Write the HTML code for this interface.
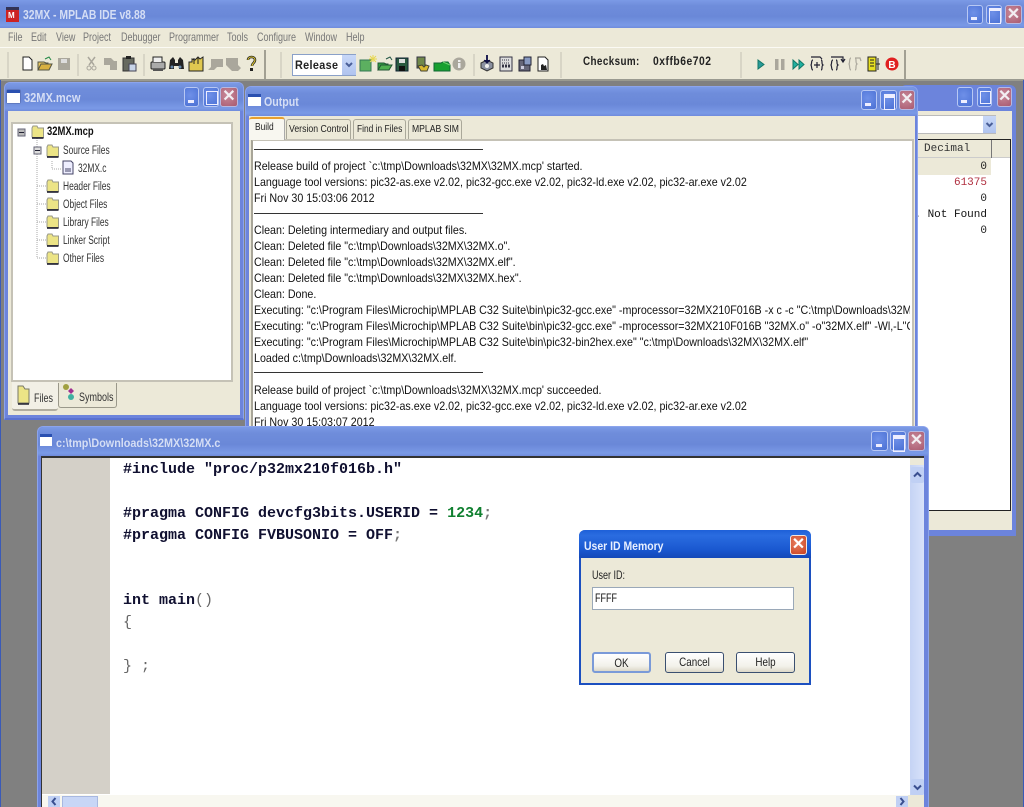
<!DOCTYPE html>
<html><head><meta charset="utf-8"><style>
html,body{margin:0;padding:0}
body{width:1024px;height:807px;position:relative;overflow:hidden;background:#808080;font-family:"Liberation Sans",sans-serif}
div,span,svg{position:absolute;box-sizing:border-box}
.tb{background:linear-gradient(#7b9ae6,#6f8ddb 20%,#6a88d8 60%,#7a9ae6 90%,#6f8bdc)}
.tt{color:#d5def5;font-weight:bold;white-space:pre;font-size:13px;line-height:16px;transform-origin:0 0}
.b{width:16px;height:19px;border:1px solid #b8c8f4;border-radius:3px;background:radial-gradient(circle at 40% 40%,#6f90e8,#4a70d4)}
.b i{position:absolute;display:block}
.x{background:radial-gradient(circle at 40% 40%,#c98a9a,#a85a70);font:bold 16px/17px "Liberation Sans",sans-serif;color:#f2eef2;text-align:center;border-color:#b8b8e0}
.o{font-size:12px;color:#111;white-space:pre;line-height:16px;left:254px;width:737px;overflow:hidden;transform:scaleX(.89);transform-origin:0 0}
.m{font-family:"Liberation Mono",monospace;font-size:15px;font-weight:bold;white-space:pre;line-height:20px;left:123px;color:#101030}
.g{color:#777;font-size:12px;line-height:16px;white-space:pre;top:29px;transform:scaleX(.75);transform-origin:0 0}
.n{font-size:11.5px;line-height:14px;color:#333;white-space:pre;transform:scaleX(.73);transform-origin:0 0}
.tab{font-size:10.5px;line-height:14px;color:#222;white-space:pre;transform:scaleX(.8);transform-origin:0 0}
.d{font-family:"Liberation Mono",monospace;font-size:11px;line-height:14px;white-space:pre;right:37px;color:#222;text-align:right}
.btn{top:652px;height:21px;width:59px;border:1px solid #3a4f70;border-radius:3px;background:linear-gradient(#fff,#f2f1ea 70%,#dcd8c8);font-size:12px;line-height:19px;text-align:center;color:#222}
.btn span{left:0;right:0;top:0;transform:scaleX(.82)}
</style></head><body>

<!-- main -->
<div class="tb" style="left:0;top:0;width:1024px;height:28px"></div>
<div style="left:6px;top:7px;width:13px;height:15px;background:#c22;border-top:3px solid #335"></div>
<div style="left:8px;top:12px;color:#fff;font:bold 8px/8px 'Liberation Sans',sans-serif">M</div>
<div class="tt" style="left:23px;top:7px;font-size:13px;transform:scaleX(.8)">32MX - MPLAB IDE v8.88</div>
<div class="b" style="left:967px;top:5px;height:19px"><i style="left:3px;bottom:3px;width:6px;height:3px;background:#eef"></i></div>
<div class="b" style="left:986px;top:5px;height:19px"><i style="left:2px;top:2px;width:10px;height:12px;border:1px solid #eef;border-top-width:3px"></i></div>
<div class="b x" style="left:1005px;top:5px;width:17px;height:19px">✕</div>

<div style="left:0;top:28px;width:1024px;height:52px;background:#ece9d8"></div>
<div style="left:0;top:47px;width:1024px;height:1px;background:#fbfaf4"></div>
<div style="left:0;top:79px;width:1024px;height:2px;background:#9a9a90"></div>
<span class="g" style="left:8px">File</span><span class="g" style="left:31px">Edit</span><span class="g" style="left:56px">View</span><span class="g" style="left:83px">Project</span><span class="g" style="left:121px">Debugger</span><span class="g" style="left:169px">Programmer</span><span class="g" style="left:227px">Tools</span><span class="g" style="left:257px">Configure</span><span class="g" style="left:305px">Window</span><span class="g" style="left:346px">Help</span>

<!-- toolbar svg -->
<svg style="left:0;top:48px" width="1024" height="32" viewBox="0 48 1024 32">
<g stroke="#c4c1b4" fill="none"><path d="M8 52v26M78 54v22M144 54v22M281 52v26M474 54v22M561 52v26M741 52v26"/></g>
<path d="M265 50v29M905 50v29" stroke="#8a887c" stroke-width="1.5"/>
<path d="M23 57h6l3 3v10h-9z" fill="#fff" stroke="#222"/>
<path d="M38 70v-8h6l2 1h2v7z" fill="#e8c860" stroke="#554"/><path d="M38 70l3-6h11l-3 6z" fill="#d8b040" stroke="#554"/><path d="M45 59l4-2 2 3" stroke="#284" fill="none"/>
<rect x="58" y="58" width="12" height="12" fill="#aaa79c"/><rect x="61" y="59" width="6" height="4" fill="#ddd"/>
<path d="M88 57l6 8M95 57l-6 8" stroke="#aaa79c" stroke-width="1.5"/><circle cx="89" cy="68" r="2" fill="none" stroke="#aaa79c"/><circle cx="94" cy="68" r="2" fill="none" stroke="#aaa79c"/>
<path d="M104 58h7l3 3h3v9h-7v-5h-6z" fill="#aaa79c"/>
<rect x="123" y="58" width="11" height="13" fill="#66695f" stroke="#333"/><rect x="126" y="56" width="5" height="3" fill="#222"/><rect x="129" y="64" width="7" height="7" fill="#c8d4e8" stroke="#445"/>
<rect x="151" y="62" width="14" height="7" rx="1" fill="#aaa" stroke="#222"/><path d="M153 62v-5h9v5" fill="#eee" stroke="#222"/><rect x="153" y="69" width="10" height="2" fill="#555"/>
<path d="M170 60l3-3 2 3v3h3v-3l2-3 3 3 1 9h-5v-3h-5v3h-5z" fill="#222"/><circle cx="172" cy="67" r="1.5" fill="#68a"/><circle cx="180" cy="67" r="1.5" fill="#68a"/>
<path d="M189 71v-9h3v-3l3 1 3-3 2 2 3-2v14z" fill="#e0c850" stroke="#222"/><path d="M194 58v6M198 58v6" stroke="#222"/>
<path d="M208 70l3-3v-8h12v8h-6l-3 3z" fill="#aaa79c"/>
<path d="M226 58h12v7l3 3-3 3h-6l-6-6z" fill="#aaa79c"/>
<path d="M248 60c0-4 7-4 7 0 0 3-3 3-3 6" fill="none" stroke="#222" stroke-width="2.5"/><path d="M248 60c0-4 7-4 7 0 0 3-3 3-3 6" fill="none" stroke="#e8d030"/><rect x="250" y="68" width="3" height="3" fill="#222"/>
<rect x="360" y="60" width="11" height="11" fill="#5cb060" stroke="#375"/><path d="M373 55v7M369 59h8M370 56l6 6M376 56l-6 6" stroke="#e8d850"/>
<path d="M378 70v-7h6l2 1h2v6z" fill="#30a040" stroke="#253"/><path d="M378 70l3-5h11l-3 5z" fill="#50b050" stroke="#253"/><path d="M386 59l4-2 2 3" stroke="#254" fill="none"/>
<rect x="396" y="58" width="12" height="13" fill="#2a5a40" stroke="#123"/><rect x="399" y="59" width="6" height="4" fill="#ddd"/><rect x="399" y="66" width="6" height="5" fill="#111"/>
<rect x="417" y="57" width="8" height="11" fill="#70884a" stroke="#334"/><path d="M418 66l3 5h6l2-5-3-1-2 2-2-2z" fill="#d8b830" stroke="#443"/>
<path d="M434 63h7l2-1h5l2 3v6h-16z" fill="#18a030" stroke="#163"/><path d="M443 62l7 3" stroke="#70d070"/>
<circle cx="459" cy="64" r="6.5" fill="#aaa79c"/><rect x="458" y="63" width="2.5" height="5" fill="#eee"/><rect x="458" y="60" width="2.5" height="2" fill="#eee"/>
<path d="M481 63l6-3 6 3v5l-6 3-6-3z" fill="#8a90a0" stroke="#333"/><path d="M487 55v7" stroke="#225" stroke-width="2"/><path d="M484 60l3 3 3-3" fill="#114" stroke="#114"/><circle cx="487" cy="66" r="2" fill="#eee"/>
<rect x="500" y="57" width="12" height="14" fill="#ddd" stroke="#334"/><path d="M502 60h8M502 63h8" stroke="#334" stroke-dasharray="1 1"/><path d="M502 66h8" stroke="#334" stroke-width="3" stroke-dasharray="2 1"/>
<rect x="519" y="60" width="11" height="11" fill="#667" stroke="#223"/><rect x="524" y="57" width="7" height="8" fill="#8899c0" stroke="#223"/><rect x="521" y="66" width="3" height="3" fill="#ccd"/>
<path d="M538 57h7l3 3v11h-10z" fill="#fff" stroke="#222"/><path d="M541 70v-5l2-1 1 2 2-1 1 5z" fill="#222"/>
<path d="M758 60l6 4.500-6 4.500z" fill="#2a9a9a" stroke="#176"/>
<rect x="775" y="59" width="3.500" height="11" fill="#aaa79c"/><rect x="781" y="59" width="3.500" height="11" fill="#aaa79c"/>
<path d="M793 60l5 4.500-5 4.500zM799 60l5 4.500-5 4.500z" fill="#20b0a0" stroke="#176"/>
<g fill="none" stroke="#223" stroke-width="1.200"><path d="M813 60c-2 0-1 4-2 5 1 1 0 5 2 5M821 60c2 0 0 4 2 5-2 1 0 5-2 5M811 57h9l2 2M817 62v6M814 65h6"/></g>
<g fill="none" stroke="#223" stroke-width="1.200"><path d="M833 60c-2 0-1 4-2 5 1 1 0 5 2 5M836 60c2 0 0 4 2 5-2 1 0 5-2 5M831 57h12v4M841 59l2 3 2-3"/></g>
<g fill="none" stroke="#aaa79c" stroke-width="1.200"><path d="M851 58c-2 0-1 5-2 6 1 1 0 6 2 6M855 58c2 0 0 5 2 6-2 1 0 6-2 6M855 58h5l1 3"/></g>
<rect x="868" y="57" width="8" height="14" fill="#e8e020" stroke="#222"/><path d="M870 60h4M870 63h4M870 66h4M878 58v12M876 64h4" stroke="#222"/>
<circle cx="892" cy="64" r="6.500" fill="#e02020"/>
<text x="892" y="68" font-family="Liberation Sans" font-weight="bold" font-size="10" fill="#fff" text-anchor="middle">B</text>
</svg>
<div style="left:292px;top:54px;width:64px;height:22px;background:#fff;border:1px solid #8aa0c8"></div>
<div style="left:342px;top:55px;width:14px;height:20px;background:linear-gradient(#c8d8f8,#b0c4ef)"></div>
<svg style="left:342px;top:55px" width="14" height="20"><path d="M4 8l3 3 3-3" fill="none" stroke="#4a5f98" stroke-width="2"/></svg>
<div style="left:295px;top:57px;font:bold 12px/16px 'Liberation Sans',sans-serif;letter-spacing:.4px;color:#222;white-space:pre;transform:scaleX(.9);transform-origin:0 0">Release</div>
<div style="left:583px;top:54px;font:bold 12px/14px 'Liberation Sans',sans-serif;letter-spacing:.5px;color:#222;white-space:pre;transform:scaleX(.82);transform-origin:0 0">Checksum:</div>
<div style="left:653px;top:54px;font:bold 12px/14px 'Liberation Sans',sans-serif;letter-spacing:.6px;color:#222;white-space:pre;transform:scaleX(.86);transform-origin:0 0">0xffb6e702</div>

<!-- MDI edges -->
<div style="left:0;top:80px;width:1px;height:727px;background:#3a5ab8"></div>
<div style="left:1023px;top:80px;width:1px;height:727px;background:#3a5ab8"></div>

<!-- behind window -->
<div style="left:900px;top:85px;width:116px;height:451px;background:#6c84dc;border-radius:6px 6px 0 0"></div>
<div class="b" style="left:957px;top:87px;width:16px;height:20px"><i style="left:3px;bottom:3px;width:6px;height:3px;background:#eef"></i></div>
<div class="b" style="left:977px;top:87px;width:15px;height:20px"><i style="left:2px;top:3px;width:9px;height:11px;border:1px solid #eef"></i></div>
<div class="b x" style="left:997px;top:87px;width:15px;height:20px;line-height:18px">✕</div>
<div style="left:905px;top:111px;width:107px;height:419px;background:#ece9d8"></div>
<div style="left:905px;top:115px;width:91px;height:19px;background:#fff;border:1px solid #bbb"></div>
<div style="left:983px;top:116px;width:13px;height:17px;background:linear-gradient(#c8d8f8,#b0c4ef)"></div>
<svg style="left:983px;top:116px" width="13" height="17"><path d="M3.500 7l3 3 3-3" fill="none" stroke="#4a5f98" stroke-width="2"/></svg>
<div style="left:905px;top:139px;width:106px;height:372px;background:#fff;border:1px solid #222;border-left:0"></div>
<div style="left:905px;top:140px;width:105px;height:18px;background:#ece9d8;border-bottom:1px solid #ccc"></div>
<div style="left:991px;top:140px;width:1px;height:18px;background:#777"></div>
<div style="left:905px;top:158px;width:86px;height:17px;background:#ece9d8"></div>
<span class="d" style="left:924px;top:142px;right:auto;color:#333">Decimal</span>
<span class="d" style="top:160px">0</span>
<span class="d" style="top:176px;color:#b03040">61375</span>
<span class="d" style="top:192px">0</span>
<span class="d" style="top:208px;color:#111">. Not Found</span>
<span class="d" style="top:224px">0</span>

<!-- mcw window -->
<div style="left:4px;top:82px;width:240px;height:338px;background:#6c84dc;border-radius:6px 6px 0 0;border:1px solid #8ca4ec;border-bottom:2px solid #5a72d0"></div>
<div class="tb" style="left:5px;top:83px;width:238px;height:28px;border-radius:6px 6px 0 0"></div>
<div style="left:7px;top:90px;width:13px;height:13px;background:#fff;border-top:3px solid #2a50b0;box-shadow:0 0 1px #224"></div>
<div class="tt" style="left:24px;top:90px;transform:scaleX(.85)">32MX.mcw</div>
<div class="b" style="left:184px;top:87px;width:15px;height:20px"><i style="left:3px;bottom:3px;width:6px;height:3px;background:#eef"></i></div>
<div class="b" style="left:203px;top:87px;width:16px;height:20px"><i style="left:2px;top:3px;width:10px;height:12px;border:1px solid #eef"></i></div>
<div class="b x" style="left:220px;top:87px;width:18px;height:20px;line-height:18px">✕</div>
<div style="left:8px;top:111px;width:232px;height:304px;background:#ece9d8"></div>
<div style="left:11px;top:122px;width:222px;height:260px;background:#fff;border:2px solid #c5c2b6"></div>

<!-- tree -->
<svg style="left:0;top:110px" width="250" height="170" viewBox="0 110 250 170">
<g stroke="#aaa" stroke-dasharray="1 1" fill="none"><path d="M37 138V257M52 161v8h9M37 186h10M37 204h10M37 222h10M37 240h10M37 258h10"/></g>
<rect x="18" y="129" width="7" height="7" fill="#bbb" stroke="#667"/><path d="M19 132.500h5" stroke="#223"/>
<rect x="34" y="147" width="7" height="7" fill="#ddd" stroke="#667"/><path d="M35 150.500h5" stroke="#223"/>
<defs><g id="fo"><path d="M0 11V2l1-2h4l1 2h5.500v9.500H1z" fill="#ece486" stroke="#998"/><path d="M0 12h11.500" stroke="#112" stroke-width="1.500"/></g></defs>
<use href="#fo" x="32" y="126"/><use href="#fo" x="47" y="145"/><use href="#fo" x="47" y="180"/><use href="#fo" x="47" y="198"/><use href="#fo" x="47" y="216"/><use href="#fo" x="47" y="234"/><use href="#fo" x="47" y="252"/>
<path d="M63 161h8l2 2v11H63z" fill="#eef" stroke="#446"/><path d="M65 169h6M65 171h6" stroke="#446"/>
</svg>
<span class="n" style="left:47px;top:125px;font-weight:bold;font-size:11.5px;color:#111;transform:scaleX(.82)">32MX.mcp</span>
<span class="n" style="left:63px;top:144px">Source Files</span>
<span class="n" style="left:78px;top:162px">32MX.c</span>
<span class="n" style="left:63px;top:180px">Header Files</span>
<span class="n" style="left:63px;top:198px">Object Files</span>
<span class="n" style="left:63px;top:216px">Library Files</span>
<span class="n" style="left:63px;top:234px">Linker Script</span>
<span class="n" style="left:63px;top:252px">Other Files</span>
<div style="left:58px;top:383px;width:59px;height:25px;background:#ece9d8;border:1px solid #9a988a;border-top:0;border-radius:0 0 3px 3px"></div>
<div style="left:12px;top:382px;width:46px;height:29px;background:#f2f0e6;border-bottom:2px solid #b0ad9f;border-radius:0 0 3px 3px"></div>
<svg style="left:0;top:380px" width="120" height="32"><path d="M18 23V6h5l2 3h4v14z" fill="#ece486" stroke="#776"/><path d="M18 24h11" stroke="#223" stroke-width="1.500"/><circle cx="66" cy="7" r="3" fill="#a0a040"/><path d="M71 8l3 3-3 3-3-3z" fill="#a03090"/><circle cx="71" cy="17" r="3" fill="#40b0a0"/></svg>
<span class="n" style="left:34px;top:391px;font-size:12px;transform:scaleX(.75)">Files</span>
<span class="n" style="left:79px;top:390px;font-size:12px;transform:scaleX(.75)">Symbols</span>

<!-- Output window -->
<div style="left:245px;top:86px;width:673px;height:345px;background:#6c84dc;border-radius:6px 6px 0 0;border:1px solid #8ca4ec"></div>
<div class="tb" style="left:246px;top:87px;width:671px;height:29px;border-radius:6px 6px 0 0"></div>
<div style="left:248px;top:94px;width:13px;height:12px;background:#fff;border-top:3px solid #2a50b0"></div>
<div class="tt" style="left:264px;top:94px;font-size:12.5px;transform:scaleX(.85)">Output</div>
<div class="b" style="left:861px;top:90px;width:16px;height:20px"><i style="left:3px;bottom:3px;width:6px;height:3px;background:#eef"></i></div>
<div class="b" style="left:880px;top:90px;width:17px;height:20px"><i style="left:3px;top:3px;width:9px;height:11px;border:1px solid #eef;border-top-width:4px"></i></div>
<div class="b x" style="left:899px;top:90px;width:16px;height:20px;line-height:18px">✕</div>
<div style="left:249px;top:116px;width:666px;height:315px;background:#ece9d8"></div>
<div style="left:251px;top:139px;width:663px;height:292px;background:#fff;border:2px solid #c5c2b6;border-left-color:#a8a598"></div>
<div style="left:249px;top:117px;width:36px;height:23px;background:#f8f7f0;border-top:2px solid #e8a030;border-radius:3px 3px 0 0;border-right:1px solid #aaa"></div>
<div style="left:286px;top:119px;width:65px;height:20px;background:#ece9d8;border:1px solid #aaa89a;border-bottom:0;border-radius:3px 3px 0 0"></div>
<div style="left:353px;top:119px;width:53px;height:20px;background:#ece9d8;border:1px solid #aaa89a;border-bottom:0;border-radius:3px 3px 0 0"></div>
<div style="left:408px;top:119px;width:54px;height:20px;background:#ece9d8;border:1px solid #aaa89a;border-bottom:0;border-radius:3px 3px 0 0"></div>
<span class="tab" style="left:255px;top:120px">Build</span>
<span class="tab" style="left:289px;top:122px;transform:scaleX(.83)">Version Control</span>
<span class="tab" style="left:357px;top:122px">Find in Files</span>
<span class="tab" style="left:412px;top:122px;transform:scaleX(.82)">MPLAB SIM</span>
<div style="left:254px;top:149px;width:229px;height:1px;background:#333"></div>
<div style="left:254px;top:213px;width:229px;height:1px;background:#333"></div>
<div style="left:254px;top:372px;width:229px;height:1px;background:#333"></div>
<div class="o" style="top:158px">Release build of project `c:\tmp\Downloads\32MX\32MX.mcp' started.</div>
<div class="o" style="top:174px">Language tool versions: pic32-as.exe v2.02, pic32-gcc.exe v2.02, pic32-ld.exe v2.02, pic32-ar.exe v2.02</div>
<div class="o" style="top:190px">Fri Nov 30 15:03:06 2012</div>
<div class="o" style="top:222px">Clean: Deleting intermediary and output files.</div>
<div class="o" style="top:238px">Clean: Deleted file "c:\tmp\Downloads\32MX\32MX.o".</div>
<div class="o" style="top:254px">Clean: Deleted file "c:\tmp\Downloads\32MX\32MX.elf".</div>
<div class="o" style="top:270px">Clean: Deleted file "c:\tmp\Downloads\32MX\32MX.hex".</div>
<div class="o" style="top:286px">Clean: Done.</div>
<div class="o" style="top:302px">Executing: "c:\Program Files\Microchip\MPLAB C32 Suite\bin\pic32-gcc.exe" -mprocessor=32MX210F016B -x c -c "C:\tmp\Downloads\32MX\32MX.c"</div>
<div class="o" style="top:318px">Executing: "c:\Program Files\Microchip\MPLAB C32 Suite\bin\pic32-gcc.exe" -mprocessor=32MX210F016B "32MX.o" -o"32MX.elf" -Wl,-L"C:\Program</div>
<div class="o" style="top:334px">Executing: "c:\Program Files\Microchip\MPLAB C32 Suite\bin\pic32-bin2hex.exe" "c:\tmp\Downloads\32MX\32MX.elf"</div>
<div class="o" style="top:350px">Loaded c:\tmp\Downloads\32MX\32MX.elf.</div>
<div class="o" style="top:382px">Release build of project `c:\tmp\Downloads\32MX\32MX.mcp' succeeded.</div>
<div class="o" style="top:398px">Language tool versions: pic32-as.exe v2.02, pic32-gcc.exe v2.02, pic32-ld.exe v2.02, pic32-ar.exe v2.02</div>
<div class="o" style="top:414px">Fri Nov 30 15:03:07 2012</div>

<!-- Editor -->
<div style="left:37px;top:426px;width:892px;height:381px;background:#6c84dc;border-radius:6px 6px 0 0;border:1px solid #8ca4ec;border-bottom:0"></div>
<div class="tb" style="left:38px;top:427px;width:890px;height:29px;border-radius:6px 6px 0 0"></div>
<div style="left:40px;top:434px;width:12px;height:12px;background:#fff;border-top:3px solid #2a50b0"></div>
<div class="tt" style="left:56px;top:435px;font-size:12px;transform:scaleX(.9)">c:\tmp\Downloads\32MX\32MX.c</div>
<div class="b" style="left:871px;top:431px;width:17px;height:20px"><i style="left:4px;bottom:3px;width:6px;height:3px;background:#eef"></i></div>
<div class="b" style="left:890px;top:431px;width:16px;height:20px"><i style="left:2px;top:3px;width:10px;height:12px;border:1px solid #eef;border-top-width:4px"></i></div>
<div class="b x" style="left:908px;top:431px;width:17px;height:20px;line-height:18px">✕</div>
<div style="left:41px;top:456px;width:883px;height:351px;background:#fff;border-top:2px solid #333"></div>
<div style="left:41px;top:458px;width:69px;height:336px;background:#d4d0c8"></div>
<div style="left:41px;top:458px;width:1px;height:349px;background:#333"></div>
<div style="left:910px;top:458px;width:14px;height:337px;background:linear-gradient(90deg,#c5d3f4,#d8e2fa)"></div>
<div style="left:910px;top:458px;width:14px;height:7px;background:#ece9d8"></div>
<div style="left:911px;top:467px;width:13px;height:16px;background:#c0d0f4;border-radius:2px"></div>
<svg style="left:911px;top:467px" width="13" height="16"><path d="M3 9.500l3.500-3.500 3.500 3.500" fill="none" stroke="#3a4f90" stroke-width="2"/></svg>
<div style="left:911px;top:779px;width:13px;height:16px;background:#c0d0f4;border-radius:2px"></div>
<svg style="left:911px;top:779px" width="13" height="16"><path d="M3 6.500l3.500 3.500 3.500-3.500" fill="none" stroke="#3a4f90" stroke-width="2"/></svg>
<div style="left:42px;top:795px;width:882px;height:12px;background:#f8f7f0"></div>
<div style="left:48px;top:796px;width:12px;height:11px;background:#c0d0f4"></div>
<svg style="left:48px;top:796px" width="12" height="11"><path d="M7.500 2l-3 3.500 3 3.500" fill="none" stroke="#3a4f90" stroke-width="2"/></svg>
<div style="left:62px;top:796px;width:36px;height:11px;background:#c8d6f6;border:1px solid #a8b8e0;border-bottom:0"></div>
<div style="left:896px;top:796px;width:12px;height:11px;background:#c0d0f4"></div>
<svg style="left:896px;top:796px" width="12" height="11"><path d="M4.500 2l3 3.500-3 3.500" fill="none" stroke="#3a4f90" stroke-width="2"/></svg>
<div style="left:908px;top:795px;width:16px;height:12px;background:#ece9d8"></div>
<div class="m" style="top:460px">#include "proc/p32mx210f016b.h"</div>
<div class="m" style="top:504px">#pragma CONFIG devcfg3bits.USERID = <span style="position:static;color:#108030">1234</span><span style="position:static;color:#777">;</span></div>
<div class="m" style="top:526px">#pragma CONFIG FVBUSONIO = OFF<span style="position:static;color:#777">;</span></div>
<div class="m" style="top:591px">int main<span style="position:static;color:#666;font-weight:normal">()</span></div>
<div class="m" style="top:613px;color:#666;font-weight:normal">{</div>
<div class="m" style="top:657px;color:#666;font-weight:normal">} ;</div>

<!-- Dialog -->
<div style="left:579px;top:530px;width:232px;height:155px;background:#ece9d8;border:2px solid #1c50c0;border-top:0;border-radius:6px 6px 0 0"></div>
<div style="left:579px;top:530px;width:232px;height:28px;border-radius:6px 6px 0 0;background:linear-gradient(#1e60d8,#2a6ce0 20%,#1a58d0 70%,#1448b8)"></div>
<div style="left:584px;top:538px;font:bold 12px/16px 'Liberation Sans',sans-serif;color:#e8f0ff;white-space:pre;transform:scaleX(.87);transform-origin:0 0">User ID Memory</div>
<div class="b" style="left:790px;top:535px;width:17px;height:20px;background:radial-gradient(circle at 40% 40%,#e88060,#c84020);color:#fff;font:bold 16px/18px 'Liberation Sans',sans-serif;text-align:center;border-color:#f4e8e0">✕</div>
<div class="n" style="left:592px;top:568px;font-size:12px;color:#222;transform:scaleX(.75)">User ID:</div>
<div style="left:592px;top:587px;width:202px;height:23px;background:#fff;border:1px solid #9aa8b8"></div>
<div class="n" style="left:595px;top:591px;font-size:12px;color:#111;transform:scaleX(.75)">FFFF</div>
<div class="btn" style="left:592px;border:2px solid #7a9ad8"><span>OK</span></div>
<div class="btn" style="left:665px"><span>Cancel</span></div>
<div class="btn" style="left:736px"><span>Help</span></div>
</body></html>
